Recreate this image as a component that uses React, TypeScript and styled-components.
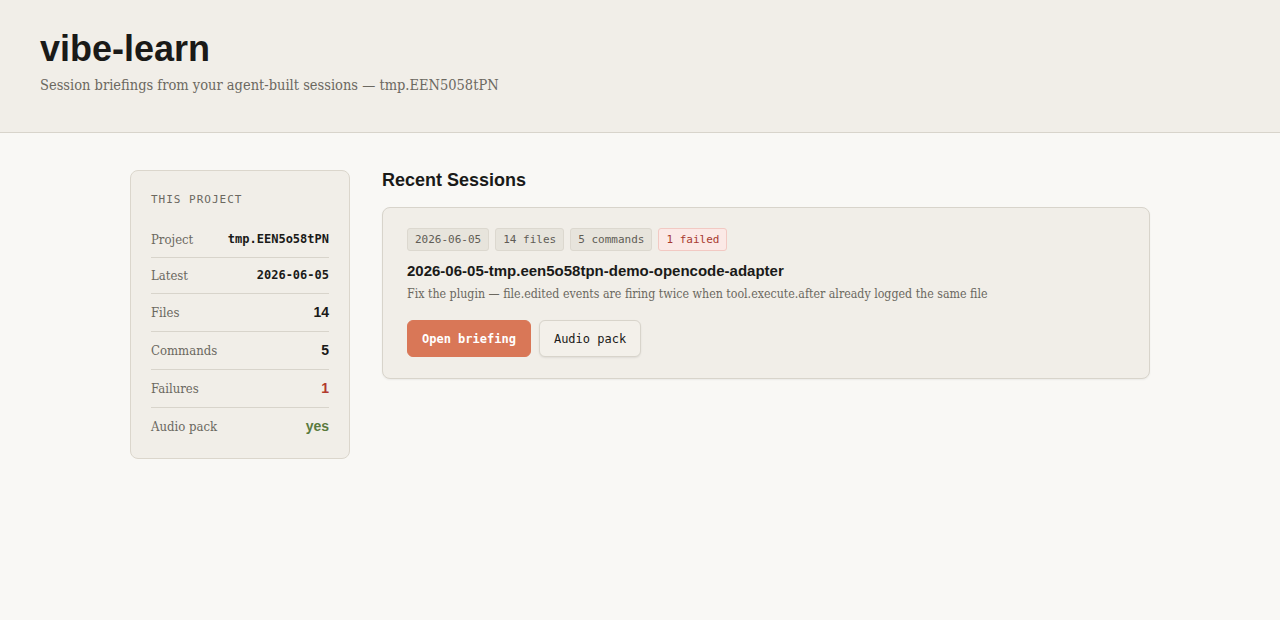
import React from 'react';
import styled, { createGlobalStyle } from 'styled-components';

const serif = `Georgia, "DejaVu Serif Condensed", "DejaVu Serif", serif`;
const sans = `"Liberation Sans", Arial, Helvetica, sans-serif`;
const mono = `"DejaVu Sans Mono", "Liberation Mono", monospace`;

const GlobalStyle = createGlobalStyle`
    html, body {
        margin: 0;
        padding: 0;
        background: #f9f8f5;
        color: #1a1a18;
        font-family: ${serif};
    }
`;

type Tone = 'plain' | 'bad' | 'good';

const stats: { label: string; value: string; tone?: Tone; mono?: boolean }[] = [
    { label: 'Project', value: 'tmp.EEN5o58tPN', mono: true },
    { label: 'Latest', value: '2026-06-05', mono: true },
    { label: 'Files', value: '14' },
    { label: 'Commands', value: '5' },
    { label: 'Failures', value: '1', tone: 'bad' },
    { label: 'Audio pack', value: 'yes', tone: 'good' },
];

const App: React.FC = () => {
    return (
        <>
            <GlobalStyle />
            <Header>
                <Title>vibe-learn</Title>
                <Subtitle>Session briefings from your agent-built sessions — tmp.EEN5058tPN</Subtitle>
            </Header>
            <Layout>
                <Sidebar>
                    <SideHeading>This project</SideHeading>
                    {stats.map((s) => (
                        <StatRow key={s.label}>
                            <StatLabel>{s.label}</StatLabel>
                            <StatValue tone={s.tone || 'plain'} mono={!!s.mono}>{s.value}</StatValue>
                        </StatRow>
                    ))}
                </Sidebar>
                <Main>
                    <SectionTitle>Recent Sessions</SectionTitle>
                    <SessionCard>
                        <Tags>
                            <Tag>2026-06-05</Tag>
                            <Tag>14 files</Tag>
                            <Tag>5 commands</Tag>
                            <Tag danger>1 failed</Tag>
                        </Tags>
                        <SessionName>2026-06-05-tmp.een5o58tpn-demo-opencode-adapter</SessionName>
                        <SessionDesc>
                            Fix the plugin — file.edited events are firing twice when tool.execute.after already logged the same file
                        </SessionDesc>
                        <Actions>
                            <Button primary>Open briefing</Button>
                            <Button>Audio pack</Button>
                        </Actions>
                    </SessionCard>
                </Main>
            </Layout>
        </>
    );
};

const Header = styled.header`
    background: #f1eee8;
    border-bottom: 1px solid #d8d4cb;
    padding: 29px 40px 37px;
    height: 66px;
`;

const Title = styled.h1`
    margin: 0;
    font-family: ${sans};
    font-size: 36px;
    font-weight: 700;
    line-height: 40px;
    color: #1a1a18;
`;

const Subtitle = styled.p`
    margin: 6px 0 0;
    font-size: 14.5px;
    line-height: 20px;
    color: #6b6860;
`;

const Layout = styled.div`
    width: 1020px;
    margin: 37px auto 0;
    display: flex;
    align-items: flex-start;
    gap: 32px;
`;

const Sidebar = styled.aside`
    width: 220px;
    box-sizing: border-box;
    flex-shrink: 0;
    background: #f1eee8;
    border: 1px solid #dbd6cc;
    border-radius: 8px;
    padding: 22px 20px 13px;
`;

const SideHeading = styled.div`
    font-family: ${mono};
    font-size: 11px;
    line-height: 13px;
    letter-spacing: 1px;
    text-transform: uppercase;
    color: #6b6860;
    margin-bottom: 16px;
`;

const StatRow = styled.div`
    display: flex;
    justify-content: space-between;
    align-items: center;
    padding: 9px 0;
    border-bottom: 1px solid #d8d4cb;
    &:last-child {
        border-bottom: none;
    }
`;

const StatLabel = styled.span`
    font-size: 13px;
    line-height: 17px;
    color: #6b6860;
`;

const toneColor: Record<Tone, string> = {
    plain: '#1a1a18',
    bad: '#b23a2e',
    good: '#5a7a3e',
};

const StatValue = styled.span<{ tone: Tone; mono: boolean }>`
    font-family: ${({ mono: m }) => (m ? mono : sans)};
    font-size: ${({ mono: m }) => (m ? '12px' : '14px')};
    line-height: ${({ mono: m }) => (m ? '17px' : '19px')};
    font-weight: 700;
    color: ${({ tone }) => toneColor[tone]};
`;

const Main = styled.main`
    flex: 1;
    min-width: 0;
`;

const SectionTitle = styled.h2`
    margin: 0 0 17px;
    font-family: ${sans};
    font-size: 18px;
    font-weight: 700;
    line-height: 20px;
    color: #1a1a18;
`;

const SessionCard = styled.div`
    background: #f1eee8;
    border: 1px solid #d8d4cb;
    border-radius: 8px;
    box-shadow: 0 1px 2px rgba(0, 0, 0, 0.06);
    padding: 20px 24px 21px;
`;

const Tags = styled.div`
    display: flex;
    gap: 6px;
`;

const Tag = styled.span<{ danger?: boolean }>`
    font-family: ${mono};
    font-size: 11px;
    line-height: 21px;
    padding: 0 7px;
    border-radius: 3px;
    border: 1px solid ${({ danger }) => (danger ? '#f2c9c3' : '#dcd8cf')};
    background: ${({ danger }) => (danger ? '#fbe9e6' : '#e7e4dc')};
    color: ${({ danger }) => (danger ? '#a83a30' : '#5f5c55')};
`;

const SessionName = styled.div`
    margin-top: 10px;
    font-family: ${sans};
    font-size: 15px;
    font-weight: 700;
    line-height: 20px;
    color: #1a1a18;
`;

const SessionDesc = styled.div`
    margin-top: 4px;
    font-size: 12.3px;
    line-height: 18px;
    color: #6b6860;
`;

const Actions = styled.div`
    display: flex;
    gap: 8px;
    margin-top: 17px;
`;

const Button = styled.button<{ primary?: boolean }>`
    font-family: ${mono};
    font-size: 12px;
    font-weight: ${({ primary }) => (primary ? 700 : 400)};
    height: 37px;
    padding: 0 14px;
    border-radius: 6px;
    cursor: pointer;
    border: 1px solid ${({ primary }) => (primary ? '#d97757' : '#d8d4cb')};
    background: ${({ primary }) => (primary ? '#d97757' : '#f3f0ea')};
    color: ${({ primary }) => (primary ? '#ffffff' : '#1a1a18')};
    box-shadow: ${({ primary }) => (primary ? 'none' : '0 1px 2px rgba(0,0,0,0.08)')};
`;

export default App;
